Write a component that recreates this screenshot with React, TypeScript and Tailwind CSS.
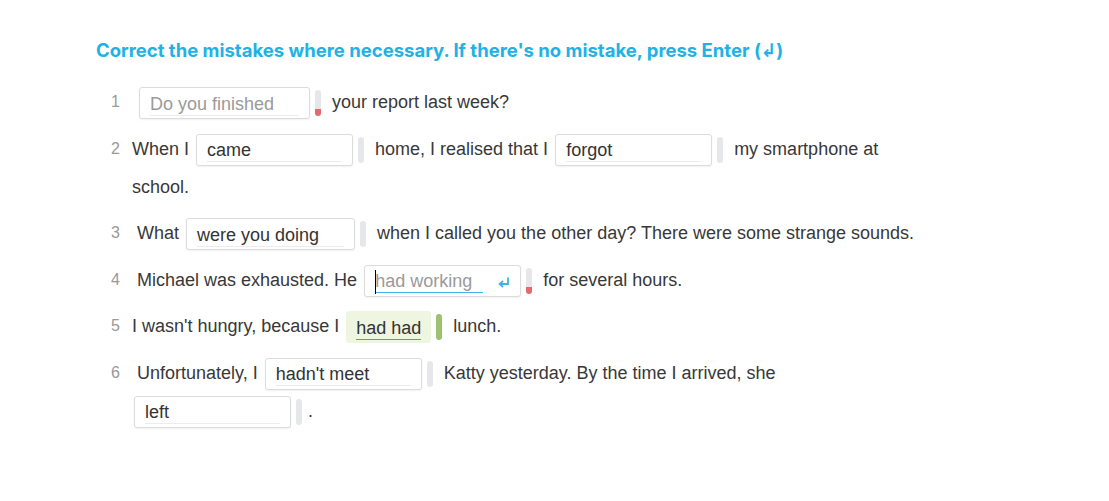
import React from "react";

type Mark = "none" | "wrong" | "correct";

const Bar: React.FC<{ mark: Mark }> = ({ mark }) => {
  if (mark === "correct") {
    return <span className="ml-[5px] w-[6px] h-[26px] rounded-full bg-[#9cc26f]" />;
  }
  return (
    <span className="ml-[5px] w-[6px] h-[26px] rounded-full bg-[#e6e7ea] flex flex-col justify-end overflow-hidden">
      {mark === "wrong" && <span className="h-[7px] bg-[#e56b6b]" />}
    </span>
  );
};

const ReturnIcon: React.FC = () => (
  <svg width="13" height="12" viewBox="0 0 13 12" fill="none" className="ml-auto">
    <path d="M11 1.5V8H3" stroke="#3fb3e3" strokeWidth="1.8" />
    <path d="M6 4.8L2.6 8L6 11.2" stroke="#3fb3e3" strokeWidth="1.8" />
  </svg>
);

const Blank: React.FC<{
  value: string;
  width?: number;
  mark?: Mark;
  state?: "filled" | "wrong" | "active" | "correct";
}> = ({ value, width = 157, mark = "none", state = "filled" }) => {
  if (state === "correct") {
    return (
      <span className="inline-flex items-center align-middle ml-[2px] mr-[6px]">
        <span className="h-[32px] px-[10px] pt-[3px] rounded-[3px] bg-[#eef6e2] flex items-center">
          <span className="leading-[21px] border-b border-[#7d9a5b] text-[#333]">{value}</span>
        </span>
        <Bar mark="correct" />
      </span>
    );
  }
  return (
    <span className="inline-flex items-center align-middle ml-[2px] mr-[6px]">
      <span
        className="relative h-[32px] pl-[10px] pr-[10px] pt-[3px] rounded-[3px] border border-[#dcdcdc] bg-white shadow-[0_1px_2px_rgba(0,0,0,0.06)] flex items-center"
        style={{ width }}
      >
        {state === "active" ? (
          <>
            <span className="absolute left-[10px] top-[4px] w-px h-[24px] bg-black" />
            <span className="w-[108px] leading-[21px] border-b border-[#3fb3e3] text-[#9a9a9a]">{value}</span>
            <ReturnIcon />
          </>
        ) : (
          <span
            className={
              "w-full leading-[21px] border-b border-[#ececec] " +
              (state === "wrong" ? "text-[#9a9a9a]" : "text-[#333]")
            }
          >
            {value}
          </span>
        )}
      </span>
      <Bar mark={mark} />
    </span>
  );
};

const Row: React.FC<{ n: number; children: React.ReactNode }> = ({ n, children }) => (
  <div className="flex">
    <div className="w-[36px] shrink-0 pr-[12px] text-right text-[16px] leading-[38px] text-[#999]">{n}</div>
    <div className="w-[790px] text-[18px] leading-[38px] text-[#383838]">{children}</div>
  </div>
);

export default function App() {
  return (
    <div className="min-h-screen bg-white pl-[96px] pt-[38px]" style={{ fontFamily: '"Liberation Sans", Arial, sans-serif' }}>
      <h1
        className="text-[18.5px] leading-[24px] font-bold text-[#20b2e6] mb-[21px]"
        style={{ fontFamily: 'Inter, "DejaVu Sans", sans-serif' }}
      >
        Correct the mistakes where necessary. If there's no mistake, press Enter (↲)
      </h1>
      <div className="flex flex-col gap-[8.5px]">
        <Row n={1}>
          {"\u00a0"}
          <Blank value="Do you finished" width={171} state="wrong" mark="wrong" /> your report last week?
        </Row>
        <Row n={2}>
          When I <Blank value="came" /> home, I realised that I <Blank value="forgot" /> my smartphone at school.
        </Row>
        <Row n={3}>
          {"\u00a0"}What <Blank value="were you doing" width={169} /> when I called you the other day? There were some
          strange sounds.
        </Row>
        <Row n={4}>
          {"\u00a0"}Michael was exhausted. He <Blank value="had working" state="active" mark="wrong" /> for several
          hours.
        </Row>
        <Row n={5}>
          I wasn't hungry, because I <Blank value="had had" state="correct" /> lunch.
        </Row>
        <Row n={6}>
          {"\u00a0"}Unfortunately, I <Blank value="hadn't meet" /> Katty yesterday. By the time I arrived, she{" "}
          <Blank value="left" />.
        </Row>
      </div>
    </div>
  );
}
